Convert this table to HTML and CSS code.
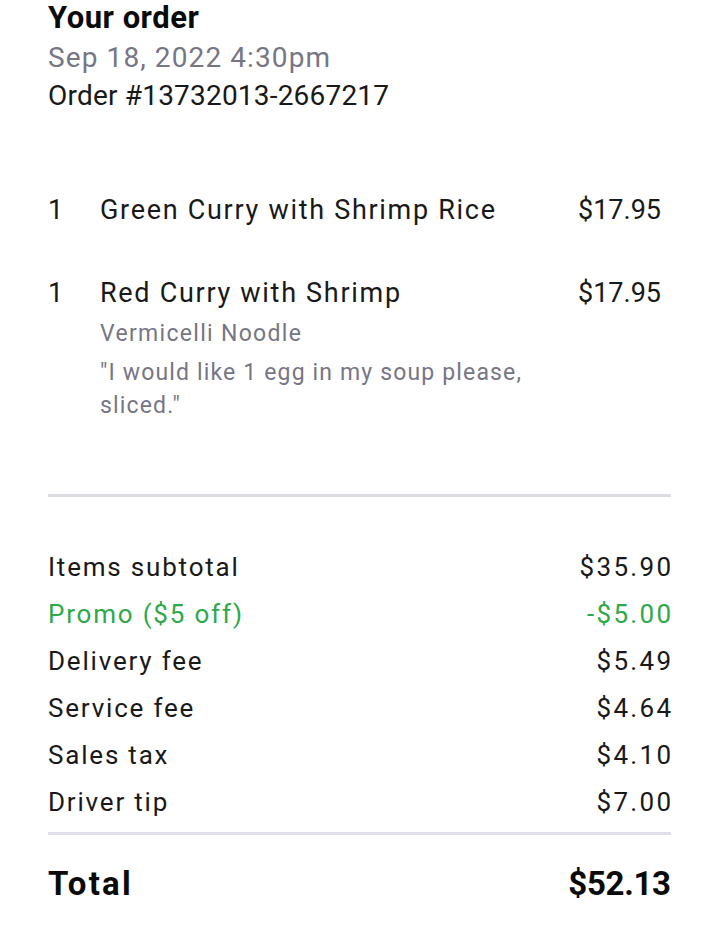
FILE: index.html
```html
<!DOCTYPE html>
<html>
<head>
<meta charset="utf-8">
<link rel="stylesheet" href="styles.css">
</head>
<body>
<main class="page">
  <header class="head">
    <h1 class="title">Your order</h1>
    <div class="date">Sep 18, 2022 4:30pm</div>
    <div class="order-no">Order #13732013-2667217</div>
  </header>

  <section class="items">
    <div class="item item-first">
      <span class="qty">1</span>
      <div class="item-body">
        <div class="item-name">Green Curry with Shrimp Rice</div>
      </div>
      <span class="item-price">$17.95</span>
    </div>
    <div class="item item-second">
      <span class="qty">1</span>
      <div class="item-body">
        <div class="item-name">Red Curry with Shrimp</div>
        <div class="item-opt">Vermicelli Noodle</div>
        <div class="item-note">"I would like 1 egg in my soup please, sliced."</div>
      </div>
      <span class="item-price">$17.95</span>
    </div>
  </section>

  <hr class="rule rule-top">

  <section class="summary">
    <div class="row"><span class="label">Items subtotal</span><span class="amt">$35.90</span></div>
    <div class="row promo"><span class="label">Promo ($5 off)</span><span class="amt">-$5.00</span></div>
    <div class="row"><span class="label">Delivery fee</span><span class="amt">$5.49</span></div>
    <div class="row"><span class="label">Service fee</span><span class="amt">$4.64</span></div>
    <div class="row"><span class="label">Sales tax</span><span class="amt">$4.10</span></div>
    <div class="row"><span class="label">Driver tip</span><span class="amt">$7.00</span></div>
  </section>

  <hr class="rule rule-bottom">

  <div class="total"><span class="total-label">Total</span><span class="total-amt">$52.13</span></div>
</main>
</body>
</html>
```

FILE: styles.css
```css
* { box-sizing: border-box; }
html, body { margin: 0; padding: 0; background: #ffffff; }
body {
  font-family: Roboto, "Liberation Sans", sans-serif;
  color: #191919;
}
.page {
  width: 720px;
  padding: 0 49px 0 48px;
}
.title {
  margin: 0;
  font-size: 31px;
  line-height: 35px;
  font-weight: 700;
  color: #0b0b0b;
  letter-spacing: 0.5px;
}
.date {
  margin-top: 4px;
  font-size: 28px;
  line-height: 38px;
  letter-spacing: 1.1px;
  color: #767685;
}
.order-no {
  font-size: 28px;
  line-height: 38px;
  letter-spacing: 0.2px;
  color: #191919;
}
.items { margin-top: 78px; }
.item {
  display: flex;
  align-items: flex-start;
  padding-right: 10px;
}
.item-second { margin-top: 49px; }
.qty {
  width: 52px;
  flex: none;
  font-size: 27px;
  line-height: 34px;
}
.item-body { flex: 1; }
.item-name {
  font-size: 27px;
  line-height: 34px;
  letter-spacing: 1.7px;
}
.item-price {
  flex: none;
  font-size: 27px;
  line-height: 34px;
}
.item-opt {
  margin-top: 7px;
  font-size: 23px;
  line-height: 33px;
  letter-spacing: 1.3px;
  color: #767685;
}
.item-note {
  margin-top: 6px;
  width: 440px;
  font-size: 23px;
  line-height: 33px;
  letter-spacing: 1.15px;
  color: #767685;
}
.rule {
  margin: 0;
  border: 0;
  height: 3px;
  background: #dcdce3;
}
.rule-top { margin-top: 72px; }
.summary { margin-top: 47px; }
.row {
  display: flex;
  justify-content: space-between;
  font-size: 26px;
  line-height: 47px;
}
.label { letter-spacing: 1.8px; }
.amt { letter-spacing: 2.3px; margin-right: -2.3px; }
.promo { color: #2fa84a; }
.rule-bottom {
  margin-top: 6px;
  height: 3px;
  background: #e0e0ec;
}
.total {
  margin-top: 29px;
  display: flex;
  justify-content: space-between;
  font-size: 33px;
  line-height: 40px;
  font-weight: 700;
  color: #0b0b0b;
}
.total-label { letter-spacing: 2.2px; }
.total-amt { letter-spacing: -0.3px; margin-right: 0.3px; }
```
